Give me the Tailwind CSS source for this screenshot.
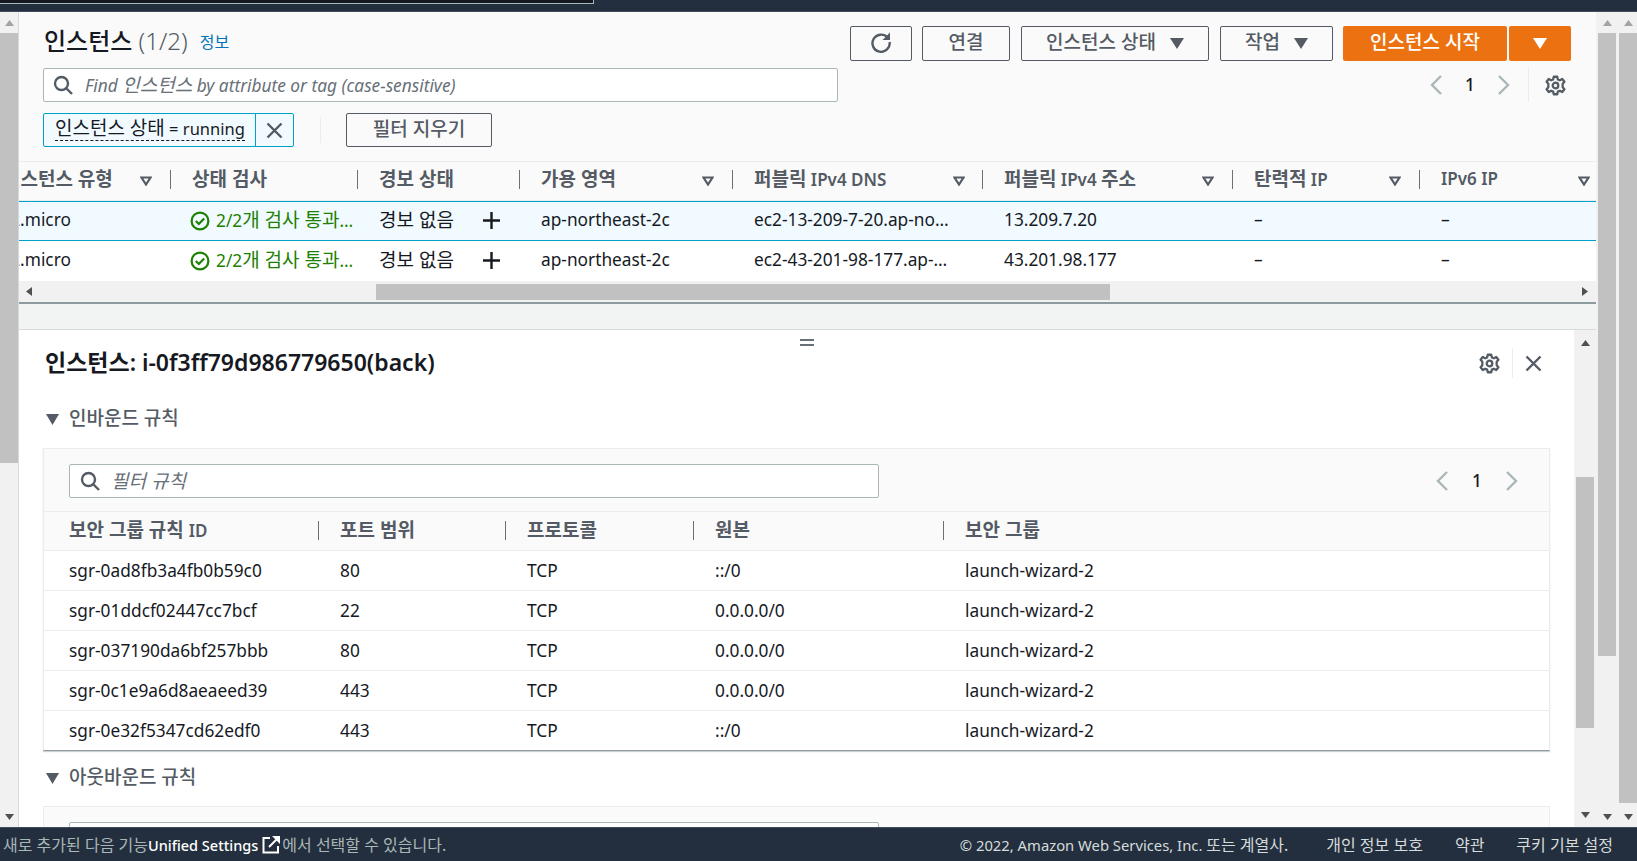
<!DOCTYPE html>
<html lang="ko">
  <head>
    <meta charset="UTF-8" />
    <title>인스턴스 | EC2</title>
    <script src="https://cdn.jsdelivr.net/npm/@tailwindcss/browser@4"></script>
  </head>
  <body class="w-[1637px] h-[861px] overflow-hidden flex flex-col bg-white text-[#16191f] text-[17.3px] leading-[24px] font-['Noto_Sans','Noto_Sans_CJK_KR',sans-serif]">
    <!-- Browser sliver + top nav -->
    <div class="h-[12px] shrink-0 bg-[#232f3e] border-b border-[#414d5c]">
      <div class="w-[594px] h-[4px] bg-[#16191f] border-b border-r border-[#aab7b8]"></div>
    </div>

    <div class="flex-1 flex min-h-0">
      <!-- Left scrollbar -->
      <div class="w-[18px] shrink-0 bg-[#f1f1f1] flex flex-col">
        <div class="h-[21px] flex items-center justify-center text-[#a3a3a3]">
          <svg class="w-[9px] h-[6px]" viewBox="0 0 9 6"><path fill="currentColor" d="M4.5 0 9 6H0z" /></svg>
        </div>
        <div class="h-[430px] bg-[#c1c1c1]"></div>
        <div class="flex-1 flex items-end justify-center pb-[7px] text-[#505050]">
          <svg class="w-[9px] h-[6px]" viewBox="0 0 9 6"><path fill="currentColor" d="M0 0h9L4.5 6z" /></svg>
        </div>
      </div>

      <main class="w-[1578px] shrink-0 flex flex-col border-l border-[#d5dbdb] bg-[#f2f3f3] min-h-0">
        <!-- Instances list -->
        <section class="h-[292px] shrink-0 bg-[#fafafa] flex flex-col border-b-2 border-[#8d9b9f]">
          <div class="h-[150px] shrink-0 border-b border-[#eaeded] pl-[24px] pt-[14px] pr-[25px]">
            <div class="flex justify-between h-[35px]">
              <div class="flex items-center gap-[12px] -mt-[6px] ml-px">
                <h1 class="text-[24px] font-medium text-[#16191f]">인스턴스 <span class="font-light text-[#545b64]">(1/2)</span></h1>
                <a class="text-[16px] text-[#0073bb] mt-[2px]">정보</a>
              </div>
              <div class="flex text-[#545b64] font-medium text-[19px]">
                <button class="w-[62px] border border-[#545b64] rounded-[2px] flex items-center justify-center">
                  <svg class="w-[22px] h-[22px] -mt-[3px]" viewBox="0 0 22 22" fill="none" stroke="#545b64" stroke-width="2.4"><path d="M17.5 6.5A8.6 8.6 0 1 0 19.6 11" /><path fill="#545b64" stroke="none" d="M20 1.5v7.5h-7.5z" /></svg>
                </button>
                <button class="w-[88px] ml-[10px] border border-[#545b64] rounded-[2px] pb-[3px]">연결</button>
                <button class="w-[188px] ml-[11px] border border-[#545b64] rounded-[2px] pb-[3px] flex items-center justify-center gap-[14px]">
                  인스턴스 상태
                  <svg class="w-[14px] h-[11px] mt-[3px]" viewBox="0 0 14 11"><path fill="#545b64" d="M0 0h14L7 11z" /></svg>
                </button>
                <button class="w-[113px] ml-[11px] border border-[#545b64] rounded-[2px] pb-[3px] flex items-center justify-center gap-[14px]">
                  작업
                  <svg class="w-[14px] h-[11px] mt-[3px]" viewBox="0 0 14 11"><path fill="#545b64" d="M0 0h14L7 11z" /></svg>
                </button>
                <div class="flex gap-[2px] ml-[10px] text-white">
                  <button class="w-[164px] bg-[#ec7211] rounded-[2px] pb-[3px]">인스턴스 시작</button>
                  <button class="w-[62px] bg-[#ec7211] rounded-[2px] flex items-center justify-center">
                    <svg class="w-[14px] h-[11px]" viewBox="0 0 14 11"><path fill="#fff" d="M0 0h14L7 11z" /></svg>
                  </button>
                </div>
              </div>
            </div>

            <div class="flex justify-between h-[34px] mt-[7px]">
              <div class="w-[795px] border border-[#aab7b8] rounded-[2px] bg-white flex items-center pl-[9px] gap-[12px]">
                <svg class="w-[20px] h-[20px] shrink-0" viewBox="0 0 20 20" fill="none" stroke="#545b64" stroke-width="2.4"><circle cx="8.5" cy="8.5" r="6.5" /><path d="m13 13 6 6" /></svg>
                <span class="italic text-[#687078]">Find <span class="text-[19px]">인스턴스</span> by attribute or tag (case-sensitive)</span>
              </div>
              <div class="flex items-center pr-[5px]">
                <svg class="w-[14px] h-[22px] mr-[22px]" viewBox="0 0 14 22" fill="none" stroke="#aab7b8" stroke-width="2.4"><path d="M12 2 3 11l9 9" /></svg>
                <span class="w-[10px] text-center font-medium">1</span>
                <svg class="w-[14px] h-[22px] ml-[22px]" viewBox="0 0 14 22" fill="none" stroke="#aab7b8" stroke-width="2.4"><path d="m2 2 9 9-9 9" /></svg>
                <div class="w-px h-[34px] bg-[#eaeded] ml-[17px] mr-[16px]"></div>
                <svg class="w-[21px] h-[21px]" viewBox="0 0 24 24" fill="none" stroke="#545b64" stroke-width="2.6" stroke-linejoin="round"><circle cx="12" cy="12" r="3.2" /><path d="M10 2h4l.7 3 2.3 1 2.7-1.5 2.5 3.2-2 2.3v4l2 2.3-2.5 3.2-2.7-1.5-2.3 1-.7 3h-4l-.7-3-2.3-1-2.7 1.5-2.5-3.2 2-2.3v-4l-2-2.3 2.5-3.2L7 6l2.3-1z" /></svg>
              </div>
            </div>

            <div class="flex items-center h-[34px] mt-[11px]">
              <div class="w-[251px] h-full flex border border-[#00a1c9] rounded-[2px] bg-[#f1faff]">
                <div class="flex-1 pl-[11px] pt-[3px] whitespace-nowrap"><span class="border-b border-dashed border-[#16191f] text-[#16191f] text-[16.5px] leading-[23px] inline-block"><span class="text-[19px]">인스턴스 상태</span> = running</span></div>
                <div class="w-[38px] shrink-0 border-l border-[#00a1c9] flex items-center justify-center">
                  <svg class="w-[17px] h-[17px]" viewBox="0 0 17 17" fill="none" stroke="#545b64" stroke-width="2.4"><path d="m1.5 1.5 14 14m0-14-14 14" /></svg>
                </div>
              </div>
              <div class="w-px h-[26px] bg-[#eaeded] ml-[26px] mr-[25px]"></div>
              <button class="w-[146px] h-full border border-[#545b64] rounded-[2px] text-[#545b64] font-medium text-[19px] pb-[3px]">필터 지우기</button>
            </div>
          </div>

          <!-- Table, scrolled sideways so the first column is cut off -->
          <div class="flex-1 overflow-hidden flex flex-col">
            <div class="-ml-[10px] w-[1590px]">
              <div class="flex h-[39px] items-center text-[#545b64] font-semibold text-[17px] border-b border-[#eaeded] pb-[4px]">
                <div class="w-[161px] flex justify-between items-center"><span class="text-[19px] -ml-[6px]">인스턴스 유형</span><svg class="w-[12px] h-[10px] mr-[18px] mt-[3px]" viewBox="0 0 12 10" fill="none" stroke="#545b64" stroke-width="2.2"><path d="M1.5 1.5h9L6 8.500z" /></svg></div>
                <div class="w-[187px] h-[19px] border-l border-[#687078] pl-[21px] flex items-center text-[19px]">상태 검사</div>
                <div class="w-[162px] h-[19px] border-l border-[#687078] pl-[21px] flex items-center text-[19px]">경보 상태</div>
                <div class="w-[213px] h-[19px] border-l border-[#687078] pl-[21px] pr-[18px] flex items-center justify-between"><span class="text-[19px]">가용 영역</span><svg class="w-[12px] h-[10px] mt-[3px]" viewBox="0 0 12 10" fill="none" stroke="#545b64" stroke-width="2.2"><path d="M1.5 1.5h9L6 8.5z" /></svg></div>
                <div class="w-[250px] h-[19px] border-l border-[#687078] pl-[21px] pr-[17px] flex items-center justify-between"><span><span class="text-[19px]">퍼블릭</span> IPv4 DNS</span><svg class="w-[12px] h-[10px] mt-[3px]" viewBox="0 0 12 10" fill="none" stroke="#545b64" stroke-width="2.2"><path d="M1.5 1.5h9L6 8.5z" /></svg></div>
                <div class="w-[250px] h-[19px] border-l border-[#687078] pl-[21px] pr-[18px] flex items-center justify-between"><span><span class="text-[19px]">퍼블릭</span> IPv4 <span class="text-[19px]">주소</span></span><svg class="w-[12px] h-[10px] mt-[3px]" viewBox="0 0 12 10" fill="none" stroke="#545b64" stroke-width="2.2"><path d="M1.5 1.5h9L6 8.5z" /></svg></div>
                <div class="w-[187px] h-[19px] border-l border-[#687078] pl-[21px] pr-[18px] flex items-center justify-between"><span><span class="text-[19px]">탄력적</span> IP</span><svg class="w-[12px] h-[10px] mt-[3px]" viewBox="0 0 12 10" fill="none" stroke="#545b64" stroke-width="2.2"><path d="M1.5 1.5h9L6 8.5z" /></svg></div>
                <div class="w-[179px] h-[19px] border-l border-[#687078] pl-[21px] pr-[8px] flex items-center justify-between"><span>IPv6 IP</span><svg class="w-[12px] h-[10px] mt-[3px]" viewBox="0 0 12 10" fill="none" stroke="#545b64" stroke-width="2.2"><path d="M1.5 1.5h9L6 8.5z" /></svg></div>
              </div>
              <div class="flex h-[40px] items-center bg-[#f1faff] border-y border-[#00a1c9] pb-[2px]">
                <div class="w-[162px]"><span class="-ml-[5px] block">t2.micro</span></div>
                <div class="w-[187px] pl-[19px] flex items-center gap-[6px] text-[#1d8102] whitespace-nowrap">
                  <svg class="w-[20px] h-[20px] shrink-0 mt-[2px]" viewBox="0 0 20 20" fill="none" stroke="#1d8102" stroke-width="2.2"><circle cx="10" cy="10" r="8.4" /><path d="m5.8 10 3 3 5.4-5.6" /></svg>
                  <span>2/2<span class="text-[19px]">개 검사 통과</span>…</span>
                </div>
                <div class="w-[162px] pl-[21px] flex items-center"><span class="w-[103px] whitespace-nowrap text-[19px]">경보 없음</span>
                  <svg class="w-[19px] h-[19px]" viewBox="0 0 19 19" fill="none" stroke="#16191f" stroke-width="2.4"><path d="M9.5 1v17M1 9.5h17" /></svg>
                </div>
                <div class="w-[213px] pl-[21px]">ap-northeast-2c</div>
                <div class="w-[250px] pl-[21px] whitespace-nowrap">ec2-13-209-7-20.ap-no…</div>
                <div class="w-[250px] pl-[21px]">13.209.7.20</div>
                <div class="w-[187px] pl-[21px]">–</div>
                <div class="w-[179px] pl-[21px]">–</div>
              </div>
              <div class="flex h-[40px] items-center bg-white pb-[2px]">
                <div class="w-[162px]"><span class="-ml-[5px] block">t2.micro</span></div>
                <div class="w-[187px] pl-[19px] flex items-center gap-[6px] text-[#1d8102] whitespace-nowrap">
                  <svg class="w-[20px] h-[20px] shrink-0 mt-[2px]" viewBox="0 0 20 20" fill="none" stroke="#1d8102" stroke-width="2.2"><circle cx="10" cy="10" r="8.4" /><path d="m5.8 10 3 3 5.4-5.6" /></svg>
                  <span>2/2<span class="text-[19px]">개 검사 통과</span>…</span>
                </div>
                <div class="w-[162px] pl-[21px] flex items-center"><span class="w-[103px] whitespace-nowrap text-[19px]">경보 없음</span>
                  <svg class="w-[19px] h-[19px]" viewBox="0 0 19 19" fill="none" stroke="#16191f" stroke-width="2.4"><path d="M9.5 1v17M1 9.5h17" /></svg>
                </div>
                <div class="w-[213px] pl-[21px]">ap-northeast-2c</div>
                <div class="w-[250px] pl-[21px] whitespace-nowrap">ec2-43-201-98-177.ap-…</div>
                <div class="w-[250px] pl-[21px]">43.201.98.177</div>
                <div class="w-[187px] pl-[21px]">–</div>
                <div class="w-[179px] pl-[21px]">–</div>
              </div>
            </div>
            <!-- Horizontal scrollbar -->
            <div class="h-[21px] bg-[#f1f1f1] flex items-center">
              <div class="w-[357px] pl-[7px] shrink-0"><svg class="w-[6px] h-[9px]" viewBox="0 0 6 9"><path fill="#505050" d="M6 0v9L0 4.5z" /></svg></div>
              <div class="w-[734px] h-[16px] bg-[#c1c1c1] shrink-0"></div>
              <div class="flex-1 flex justify-end pr-[8px]"><svg class="w-[6px] h-[9px]" viewBox="0 0 6 9"><path fill="#505050" d="M0 0v9l6-4.5z" /></svg></div>
            </div>
          </div>
        </section>

        <div class="h-[25px] shrink-0 bg-[#f2f3f3]"></div>

        <!-- Detail panel -->
        <section class="flex-1 flex min-h-0 bg-white border-t border-[#d5dbdb] overflow-hidden relative">
          <div class="absolute left-[781px] top-[9px] w-[14px] flex flex-col gap-[3px]">
            <div class="h-[2px] bg-[#687078]"></div>
            <div class="h-[2px] bg-[#687078]"></div>
          </div>
          <div class="w-[1555px] shrink-0 pl-[26px] pr-[24px]">
            <div class="flex items-center justify-between h-[66px] pr-[8px]">
              <h2 class="text-[23px] font-semibold pb-[2px]">인스턴스: i-0f3ff79d986779650(back)</h2>
              <div class="flex items-center">
                <svg class="w-[21px] h-[21px]" viewBox="0 0 24 24" fill="none" stroke="#545b64" stroke-width="2.6" stroke-linejoin="round"><circle cx="12" cy="12" r="3.2" /><path d="M10 2h4l.7 3 2.3 1 2.7-1.5 2.5 3.2-2 2.3v4l2 2.3-2.5 3.2-2.7-1.5-2.3 1-.7 3h-4l-.7-3-2.3-1-2.7 1.5-2.5-3.2 2-2.3v-4l-2-2.3 2.5-3.2L7 6l2.3-1z" /></svg>
                <div class="w-px h-[30px] bg-[#eaeded] ml-[12px] mr-[12px]"></div>
                <svg class="w-[17px] h-[17px]" viewBox="0 0 17 17" fill="none" stroke="#545b64" stroke-width="2.4"><path d="m1.5 1.5 14 14m0-14-14 14" /></svg>
              </div>
            </div>

            <div class="flex items-center h-[24px] mt-[10px] text-[#545b64] font-medium text-[19px] gap-[10px] pl-px">
              <svg class="w-[13px] h-[11px] mt-[3px]" viewBox="0 0 13 11"><path fill="#545b64" d="M0 0h13L6.5 11z" /></svg>
              <span>인바운드 규칙</span>
            </div>

            <div class="mt-[18px] -ml-[2px] w-[1507px] border border-[#eaeded] border-b-[#8d9b9f] shadow-[0_1px_1px_rgba(0,28,36,0.2)]">
              <div class="h-[63px] bg-[#fafafa] border-b border-[#eaeded] pl-[25px] pr-[30px] pt-[15px] flex justify-between">
                <div class="w-[810px] h-[34px] border border-[#aab7b8] rounded-[2px] bg-white flex items-center pl-[10px] gap-[11px]">
                  <svg class="w-[20px] h-[20px] shrink-0" viewBox="0 0 20 20" fill="none" stroke="#545b64" stroke-width="2.4"><circle cx="8.5" cy="8.5" r="6.5" /><path d="m13 13 6 6" /></svg>
                  <span class="italic text-[#687078] text-[19px]">필터 규칙</span>
                </div>
                <div class="flex items-center h-[34px]">
                  <svg class="w-[14px] h-[22px] mr-[23px]" viewBox="0 0 14 22" fill="none" stroke="#aab7b8" stroke-width="2.4"><path d="M12 2 3 11l9 9" /></svg>
                  <span class="w-[10px] text-center font-medium">1</span>
                  <svg class="w-[14px] h-[22px] ml-[23px]" viewBox="0 0 14 22" fill="none" stroke="#aab7b8" stroke-width="2.4"><path d="m2 2 9 9-9 9" /></svg>
                </div>
              </div>
              <table class="w-full table-fixed border-collapse">
                <thead class="bg-[#fafafa] text-[#545b64] text-[19px]">
                  <tr class="h-[38px] border-b border-[#eaeded]">
                    <th class="w-[274px] pl-[25px] text-left font-semibold">보안 그룹 규칙 <span class="text-[17px]">ID</span></th>
                    <th class="w-[187px] text-left font-semibold"><span class="block border-l border-[#687078] pl-[21px] h-[19px] leading-[19px]">포트 범위</span></th>
                    <th class="w-[188px] text-left font-semibold"><span class="block border-l border-[#687078] pl-[21px] h-[19px] leading-[19px]">프로토콜</span></th>
                    <th class="w-[250px] text-left font-semibold"><span class="block border-l border-[#687078] pl-[21px] h-[19px] leading-[19px]">원본</span></th>
                    <th class="text-left font-semibold"><span class="block border-l border-[#687078] pl-[21px] h-[19px] leading-[19px]">보안 그룹</span></th>
                  </tr>
                </thead>
                <tbody>
                  <tr class="h-[40px] border-b border-[#eaeded]"><td class="pl-[25px] pt-[2px]">sgr-0ad8fb3a4fb0b59c0</td><td class="pl-[22px] pt-[2px]">80</td><td class="pl-[22px] pt-[2px]">TCP</td><td class="pl-[22px] pt-[2px]">::/0</td><td class="pl-[22px] pt-[2px]">launch-wizard-2</td></tr>
                  <tr class="h-[40px] border-b border-[#eaeded]"><td class="pl-[25px] pt-[2px]">sgr-01ddcf02447cc7bcf</td><td class="pl-[22px] pt-[2px]">22</td><td class="pl-[22px] pt-[2px]">TCP</td><td class="pl-[22px] pt-[2px]">0.0.0.0/0</td><td class="pl-[22px] pt-[2px]">launch-wizard-2</td></tr>
                  <tr class="h-[40px] border-b border-[#eaeded]"><td class="pl-[25px] pt-[2px]">sgr-037190da6bf257bbb</td><td class="pl-[22px] pt-[2px]">80</td><td class="pl-[22px] pt-[2px]">TCP</td><td class="pl-[22px] pt-[2px]">0.0.0.0/0</td><td class="pl-[22px] pt-[2px]">launch-wizard-2</td></tr>
                  <tr class="h-[40px] border-b border-[#eaeded]"><td class="pl-[25px] pt-[2px]">sgr-0c1e9a6d8aeaeed39</td><td class="pl-[22px] pt-[2px]">443</td><td class="pl-[22px] pt-[2px]">TCP</td><td class="pl-[22px] pt-[2px]">0.0.0.0/0</td><td class="pl-[22px] pt-[2px]">launch-wizard-2</td></tr>
                  <tr class="h-[40px]"><td class="pl-[25px] pt-[2px]">sgr-0e32f5347cd62edf0</td><td class="pl-[22px] pt-[2px]">443</td><td class="pl-[22px] pt-[2px]">TCP</td><td class="pl-[22px] pt-[2px]">::/0</td><td class="pl-[22px] pt-[2px]">launch-wizard-2</td></tr>
                </tbody>
              </table>
            </div>

            <div class="flex items-center h-[24px] mt-[14px] text-[#545b64] font-medium text-[19px] gap-[10px] pl-px">
              <svg class="w-[13px] h-[11px] mt-[3px]" viewBox="0 0 13 11"><path fill="#545b64" d="M0 0h13L6.5 11z" /></svg>
              <span>아웃바운드 규칙</span>
            </div>

            <div class="mt-[17px] -ml-[2px] w-[1507px] h-[60px] border border-[#eaeded] bg-[#fafafa] pl-[25px] pt-[15px]">
              <div class="w-[810px] h-[34px] border border-[#aab7b8] rounded-[2px] bg-white"></div>
            </div>
          </div>
          <!-- Panel scrollbar -->
          <div class="w-[22px] shrink-0 bg-[#f1f1f1] flex flex-col items-center">
            <div class="h-[147px] w-full flex flex-col items-center pt-[10px]">
              <svg class="w-[9px] h-[6px]" viewBox="0 0 9 6"><path fill="#505050" d="M4.5 0 9 6H0z" /></svg>
            </div>
            <div class="w-[18px] h-[251px] bg-[#c1c1c1]"></div>
            <div class="flex-1 flex items-end pb-[9px]"><svg class="w-[9px] h-[6px]" viewBox="0 0 9 6"><path fill="#505050" d="M0 0h9L4.5 6z" /></svg></div>
          </div>
        </section>
      </main>

      <!-- Right page scrollbars -->
      <div class="flex-1 flex bg-[#f1f1f1] min-w-0">
        <div class="w-[18px] ml-[2px] flex flex-col items-center">
          <div class="h-[21px] w-full flex items-center justify-center"><svg class="w-[9px] h-[6px]" viewBox="0 0 9 6"><path fill="#a3a3a3" d="M4.5 0 9 6H0z" /></svg></div>
          <div class="w-full h-[623px] bg-[#c1c1c1]"></div>
          <div class="flex-1"></div>
          <div class="h-[21px] flex items-center justify-center"><svg class="w-[9px] h-[6px]" viewBox="0 0 9 6"><path fill="#505050" d="M0 0h9L4.5 6z" /></svg></div>
        </div>
        <div class="w-[18px] ml-[3px] flex flex-col items-center">
          <div class="h-[21px] w-full flex items-center justify-center"><svg class="w-[9px] h-[6px]" viewBox="0 0 9 6"><path fill="#a3a3a3" d="M4.5 0 9 6H0z" /></svg></div>
          <div class="w-full h-[770px] bg-[#c1c1c1]"></div>
          <div class="flex-1"></div>
          <div class="h-[21px] flex items-center justify-center"><svg class="w-[9px] h-[6px]" viewBox="0 0 9 6"><path fill="#505050" d="M0 0h9L4.5 6z" /></svg></div>
        </div>
      </div>
    </div>

    <!-- Footer -->
    <footer class="h-[34px] shrink-0 bg-[#232f3e] border-t border-[#414d5c] flex items-center justify-between pl-[3px] pr-[24px] text-[16px] text-[#d5dbdb]">
      <div class="flex items-center">
        <span class="text-[#aab7b8]">새로 추가된 다음 기능</span><span class="text-white font-medium text-[14.5px]">Unified Settings</span>
        <svg class="w-[18px] h-[18px] ml-[4px] mr-[2px]" viewBox="0 0 18 18" fill="none" stroke="#fff" stroke-width="2"><path d="M8 2H1.5v14.5H16V10" /><path d="M7 11l9-9" /><path fill="#fff" stroke="none" d="M10 0h8v8z" /></svg>
        <span class="text-[#aab7b8]">에서 선택할 수 있습니다.</span>
      </div>
      <div class="flex items-center">
        <span class="mr-[38px] text-[14.8px]">© 2022, Amazon Web Services, Inc. <span class="text-[16px]">또는 계열사.</span></span>
        <span class="mr-[32px]">개인 정보 보호</span>
        <span class="mr-[32px]">약관</span>
        <span>쿠키 기본 설정</span>
      </div>
    </footer>
  </body>
</html>
